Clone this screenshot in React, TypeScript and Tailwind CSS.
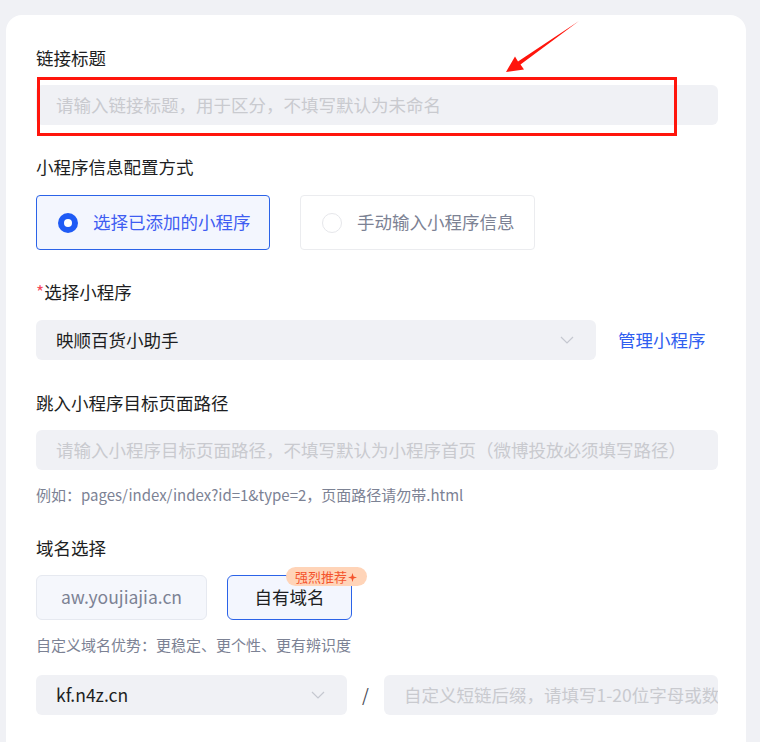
import React from "react";

const font = { fontFamily: '"Noto Sans CJK SC", "Noto Sans", sans-serif' };

function Chevron() {
  return (
    <svg width="14" height="8" viewBox="0 0 14 8" fill="none">
      <polyline points="1,1 7,7 13,1" stroke="#c5c8d0" strokeWidth="1.2" />
    </svg>
  );
}

function Label({ children, required }: { children: React.ReactNode; required?: boolean }) {
  return (
    <div className="h-6 leading-6 text-[17.5px] text-[#1d1e22]">
      {required && <span className="text-[#f5485b]">*</span>}
      {children}
    </div>
  );
}

export default function App() {
  return (
    <div
      className="relative min-h-[742px] h-[742px] overflow-hidden bg-[#f0f1f5] pt-[15px] pl-[6px] pr-[14px]"
      style={font}
    >
      <div className="bg-white rounded-[16px] h-[760px] pt-[31px] pl-[30px] pr-[28px]">
        <Label>链接标题</Label>
        <div className="mt-[15px] h-10 rounded-[6px] bg-[#f0f1f5] px-5 flex items-center text-[17.5px] text-[#c9cacf]">
          请输入链接标题，用于区分，不填写默认为未命名
        </div>

        <div className="mt-[30px]">
          <Label>小程序信息配置方式</Label>
        </div>
        <div className="mt-[16px] flex gap-[30px]">
          <div className="w-[234px] h-[55px] rounded-[4px] border border-[#2b63e8] bg-[#f3f6fe] flex items-center pl-[21px] gap-[15px]">
            <span className="w-5 h-5 rounded-full bg-[#1f5bf5] flex items-center justify-center">
              <span className="w-[8px] h-[8px] rounded-full bg-white" />
            </span>
            <span className="text-[17.5px] text-[#3f5df2]">选择已添加的小程序</span>
          </div>
          <div className="w-[235px] h-[55px] rounded-[4px] border border-[#ebecef] bg-white flex items-center pl-[21px] gap-[15px]">
            <span className="w-5 h-5 rounded-full border border-[#e6e7eb]" />
            <span className="text-[17.5px] text-[#7c8294]">手动输入小程序信息</span>
          </div>
        </div>

        <div className="mt-[30px]">
          <Label required>选择小程序</Label>
        </div>
        <div className="mt-[16px] flex items-center">
          <div className="w-[560px] h-10 rounded-[6px] bg-[#f0f1f5] pl-5 pr-[22px] flex items-center justify-between text-[17.5px] text-[#1d1e22]">
            <span>映顺百货小助手</span>
            <Chevron />
          </div>
          <span className="ml-[22px] text-[17.5px] text-[#2f5ef0]">管理小程序</span>
        </div>

        <div className="mt-[31px]">
          <Label>跳入小程序目标页面路径</Label>
        </div>
        <div className="mt-[15px] h-10 rounded-[6px] bg-[#f0f1f5] px-5 flex items-center text-[17.5px] text-[#c9cacf] whitespace-nowrap overflow-hidden">
          请输入小程序目标页面路径，不填写默认为小程序首页（微博投放必须填写路径）
        </div>
        <div className="mt-[15px] h-5 leading-5 text-[15px] text-[#7c8294]">
          例如：pages/index/index?id=1&amp;type=2，页面路径请勿带.html
        </div>

        <div className="mt-[31px]">
          <Label>域名选择</Label>
        </div>
        <div className="mt-[15px] flex gap-[20px]">
          <div className="w-[171px] h-[45px] rounded-[6px] border border-[#e6e9f0] bg-[#f5f7fc] flex items-center justify-center text-[17.5px] text-[#7c8294]">
            aw.youjiajia.cn
          </div>
          <div className="relative w-[125px] h-[45px] rounded-[6px] border border-[#2b63e8] bg-[#f3f6fe] flex items-center justify-center text-[17.5px] text-[#1d1e22]">
            自有域名
            <span className="absolute left-[58px] top-[-9px] h-[19px] w-[81px] rounded-full bg-[#ffd4b8] flex items-center pl-[9px] text-[13px] leading-none text-[#f4532c] whitespace-nowrap">
              强烈推荐
              <svg width="9" height="9" viewBox="0 0 10 10" className="ml-[1px] mt-[2px]">
                <path d="M5 0 L6.2 3.8 L10 5 L6.2 6.2 L5 10 L3.8 6.2 L0 5 L3.8 3.8 Z" fill="#f4532c" />
              </svg>
            </span>
          </div>
        </div>
        <div className="mt-[15px] h-5 leading-5 text-[15px] text-[#7c8294]">
          自定义域名优势：更稳定、更个性、更有辨识度
        </div>

        <div className="mt-[20px] flex items-center">
          <div className="w-[311px] h-10 rounded-[6px] bg-[#f0f1f5] pl-5 pr-[22px] flex items-center justify-between text-[17.5px] text-[#1d1e22]">
            <span>kf.n4z.cn</span>
            <Chevron />
          </div>
          <span className="w-[37px] text-center text-[17.5px] text-[#4a4d57]">/</span>
          <div className="flex-1 min-w-0 h-10 rounded-[6px] bg-[#f0f1f5] px-5 flex items-center text-[17.5px] text-[#c9cacf] whitespace-nowrap overflow-hidden">
            自定义短链后缀，请填写1-20位字母或数字
          </div>
        </div>
      </div>

      {/* annotation */}
      <div className="absolute left-[37px] top-[77px] w-[640px] h-[59px] border-[3px] border-[#ff150c]" />
      <svg className="absolute left-0 top-0" width="760" height="742" viewBox="0 0 760 742">
        <polygon
          points="579,21 520.5,64.5 524,69.5 506,72 515,56.5 518,61.5"
          fill="#ff150c"
        />
      </svg>
    </div>
  );
}
